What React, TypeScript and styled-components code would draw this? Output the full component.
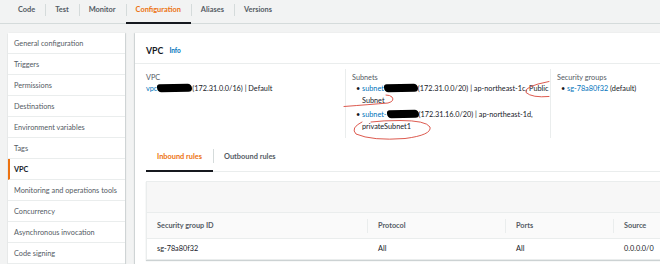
import styled, { createGlobalStyle } from "styled-components";

const GlobalStyle = createGlobalStyle`
  html, body {
    margin: 0;
    padding: 0;
  }
  body {
    background: #f2f3f3;
    font-family: Lato, "Liberation Sans", sans-serif;
    color: #16191f;
    overflow: hidden;
  }
`;

const Page = styled.div`
  width: 660px;
  height: 264px;
  overflow: hidden;
`;

const TopTabs = styled.div`
  display: flex;
  height: 23px;
  padding-left: 8px;
  border-bottom: 1px solid #d5dbdb;
`;

const Tab = styled.div<{ active?: boolean }>`
  position: relative;
  padding: 0 10px;
  font-size: 7.4px;
  font-weight: 700;
  line-height: 19px;
  color: ${(p) => (p.active ? "#ec7211" : "#545b64")};
  &:not(:first-child)::before {
    content: "";
    position: absolute;
    left: 0;
    top: 4px;
    height: 12px;
    width: 1px;
    background: #d5dbdb;
  }
  &::after {
    content: "";
    position: absolute;
    left: 0;
    right: 0;
    bottom: -1px;
    height: 2px;
    background: ${(p) => (p.active ? "#16191f" : "transparent")};
  }
`;

const Body = styled.div`
  display: flex;
  gap: 10px;
  padding: 9px 0 0 8px;
`;

const Sidebar = styled.div`
  width: 117px;
  flex-shrink: 0;
  background: #fff;
  box-shadow: 0 1px 1px rgba(0, 28, 36, 0.25), 1px 0 1px rgba(0, 28, 36, 0.1);
`;

const SideItem = styled.div<{ active?: boolean }>`
  height: 21px;
  box-sizing: border-box;
  display: flex;
  align-items: center;
  border-bottom: 1px solid #eaeded;
  padding-left: ${(p) => (p.active ? "4px" : "6px")};
  border-left: ${(p) => (p.active ? "2px solid #ec7211" : "none")};
  font-size: 7.3px;
  font-weight: ${(p) => (p.active ? 700 : 400)};
  color: ${(p) => (p.active ? "#16191f" : "#545b64")};
  white-space: nowrap;
`;

const Main = styled.div`
  width: 540px;
  flex-shrink: 0;
  height: 240px;
  background: #fff;
  box-shadow: 0 1px 1px rgba(0, 28, 36, 0.25), -1px 0 1px rgba(0, 28, 36, 0.1);
`;

const MainHeader = styled.div`
  height: 31px;
  box-sizing: border-box;
  padding: 5px 0 0 11px;
  display: flex;
  align-items: center;
  gap: 6px;
  border-bottom: 1px solid #eaeded;
`;

const Heading = styled.h2`
  margin: 0;
  font-size: 8.8px;
  font-weight: 700;
  color: #16191f;
`;

const InfoLink = styled.span`
  font-size: 6.5px;
  font-weight: 700;
  color: #0073bb;
`;

const Columns = styled.div`
  position: relative;
  display: grid;
  grid-template-columns: 210px 205px 1fr;
  height: 77px;
  padding-top: 8px;
  box-sizing: border-box;
`;

const Column = styled.div`
  padding-left: 11px;
  height: 66px;
  margin-top: -3px;
  padding-top: 3px;
  & + & {
    border-left: 1px solid #eaeded;
    padding-left: 6px;
  }
`;

const Label = styled.div`
  font-size: 7.3px;
  line-height: 11px;
  color: #545b64;
`;

const Value = styled.div`
  font-size: 7.3px;
  line-height: 12px;
  color: #16191f;
  white-space: nowrap;
`;

const Link = styled.span`
  color: #0073bb;
`;

const Redact = styled.span<{ w: number }>`
  display: inline-block;
  width: ${(p) => p.w}px;
  height: 8px;
  vertical-align: -1px;
  background: #000;
  border-radius: 3px 5px 4px 5px;
  transform: rotate(-1deg);
`;

const List = styled.ul`
  list-style: none;
  margin: 0;
  padding: 0 0 0 4px;
`;

const Item = styled.li`
  display: grid;
  grid-template-columns: 6px 1fr;
  font-size: 7.3px;
  line-height: 12px;
  color: #16191f;
  white-space: nowrap;
  margin-bottom: 2px;
`;

const Marks = styled.svg`
  position: absolute;
  left: 0;
  top: 0;
  width: 540px;
  height: 90px;
  pointer-events: none;
  overflow: visible;
`;

const RulesSection = styled.div`
  padding-left: 11px;
`;

const RuleTabs = styled.div`
  display: flex;
  height: 30px;
  border-bottom: 1px solid #eaeded;
`;

const RuleTab = styled(Tab)`
  padding: 0 11px;
  line-height: 31px;
  &:not(:first-child)::before {
    top: 8px;
    height: 14px;
  }
`;

const Table = styled.div`
  margin-top: 9px;
  border: 1px solid #eaeded;
  border-right: none;
  box-shadow: 0 1px 1px rgba(0, 28, 36, 0.2);
`;

const Toolbar = styled.div`
  height: 30px;
  background: #f7f7f7;
`;

const Row = styled.div<{ head?: boolean }>`
  display: grid;
  grid-template-columns: 220px 138px 108px 1fr;
  height: ${(p) => (p.head ? "25px" : "20px")};
  align-items: center;
  background: ${(p) => (p.head ? "#fafafa" : "#fff")};
  border-top: 1px solid #eaeded;
  font-size: 7.3px;
  font-weight: ${(p) => (p.head ? 700 : 400)};
  color: ${(p) => (p.head ? "#545b64" : "#16191f")};
`;

const Cell = styled.div<{ divider?: boolean }>`
  padding-left: 10px;
  line-height: 14px;
  border-left: 1px solid ${(p) => (p.divider ? "#eaeded" : "transparent")};
  &:first-child {
    border-left: none;
    padding-left: 10px;
  }
`;

const sideItems = [
  "General configuration",
  "Triggers",
  "Permissions",
  "Destinations",
  "Environment variables",
  "Tags",
  "VPC",
  "Monitoring and operations tools",
  "Concurrency",
  "Asynchronous invocation",
  "Code signing",
];

const topTabs = ["Code", "Test", "Monitor", "Configuration", "Aliases", "Versions"];

export default function App() {
  return (
    <Page>
      <GlobalStyle />
      <TopTabs>
        {topTabs.map((t) => (
          <Tab key={t} active={t === "Configuration"}>
            {t}
          </Tab>
        ))}
      </TopTabs>
      <Body>
        <Sidebar>
          {sideItems.map((s) => (
            <SideItem key={s} active={s === "VPC"}>
              {s}
            </SideItem>
          ))}
        </Sidebar>
        <Main>
          <MainHeader>
            <Heading>VPC</Heading>
            <InfoLink>Info</InfoLink>
          </MainHeader>
          <Columns>
            <Column>
              <Label>VPC</Label>
              <Value>
                <Link>vpc</Link>
                <Redact w={35} />
                (172.31.0.0/16) | Default
              </Value>
            </Column>
            <Column>
              <Label>Subnets</Label>
              <List>
                <Item>
                  <span>•</span>
                  <span>
                    <Link>subnet</Link>
                    <Redact w={34} />
                    (172.31.0.0/20) | ap-northeast-1c, Public
                    <br />
                    Subnet
                  </span>
                </Item>
                <Item>
                  <span>•</span>
                  <span>
                    <Link>subnet-</Link>
                    <Redact w={32} />
                    (172.31.16.0/20) | ap-northeast-1d,
                    <br />
                    privateSubnet1
                  </span>
                </Item>
              </List>
            </Column>
            <Column>
              <Label>Security groups</Label>
              <List>
                <Item>
                  <span>•</span>
                  <span>
                    <Link>sg-78a80f32</Link> (default)
                  </span>
                </Item>
              </List>
            </Column>
            <Marks viewBox="0 0 540 90">
              <g fill="none" stroke="#d8473b" strokeWidth="0.9" strokeLinecap="round">
                <path d="M209 42.5 Q235 40.5 253 39 Q260 37 257 33 Q255 31 251 31" />
                <path d="M414 17.5 Q388 22.5 391 28.5 Q397 34 414 32.5" />
                <path d="M227 58 Q215 64 221 70 Q237 77 270 74.5 Q297 71 295 63 Q291 56.5 265 56.5 Q248 56.5 236 58" />
              </g>
            </Marks>
          </Columns>
          <RulesSection>
            <RuleTabs>
              <RuleTab active>Inbound rules</RuleTab>
              <RuleTab>Outbound rules</RuleTab>
            </RuleTabs>
            <Table>
              <Toolbar />
              <Row head>
                <Cell>Security group ID</Cell>
                <Cell divider>Protocol</Cell>
                <Cell divider>Ports</Cell>
                <Cell divider>Source</Cell>
              </Row>
              <Row>
                <Cell>sg-78a80f32</Cell>
                <Cell>All</Cell>
                <Cell>All</Cell>
                <Cell>0.0.0.0/0</Cell>
              </Row>
            </Table>
          </RulesSection>
        </Main>
      </Body>
    </Page>
  );
}
